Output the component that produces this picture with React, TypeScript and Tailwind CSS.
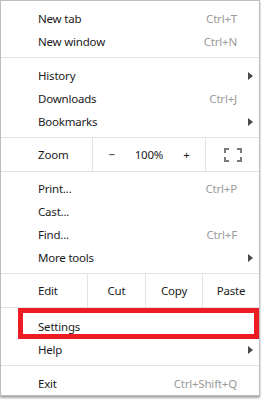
import React from "react";

const font = { fontFamily: '"Noto Sans", "Open Sans", sans-serif' };

function Arrow() {
  return (
    <svg width="5" height="8" viewBox="0 0 5 8" className="ml-auto mr-[6px]">
      <path d="M0 0 L5 4 L0 8 Z" fill="#4a4a4a" />
    </svg>
  );
}

function Item({ label, shortcut, sub }: { label: string; shortcut?: string; sub?: boolean }) {
  return (
    <div className="flex h-[23px] items-center pl-[37px] text-[11.5px] tracking-[-0.2px] text-[#1b1b1b]">
      <span>{label}</span>
      {shortcut && <span className="ml-auto pr-[22px] text-[#9a9a9a]">{shortcut}</span>}
      {sub && <Arrow />}
    </div>
  );
}

function Sep() {
  return <div className="mt-[4px] mb-[6px] h-px bg-[#e3e3e3]" />;
}

export default function App() {
  return (
    <div className="h-[402px] w-[262px] bg-white" style={font}>
      <div className="w-[260px] border border-[#bdbdbd] bg-white pt-[6px] shadow-[0_2px_2px_rgba(0,0,0,0.35)]">
        <Item label="New tab" shortcut="Ctrl+T" />
        <Item label="New window" shortcut="Ctrl+N" />
        <Sep />
        <Item label="History" sub />
        <Item label="Downloads" shortcut="Ctrl+J" />
        <Item label="Bookmarks" sub />

        {/* zoom row */}
        <div className="mt-[4px] flex h-[35px] border-y border-[#e3e3e3] text-[11.5px] tracking-[-0.2px] text-[#1b1b1b]">
          <div className="flex w-[92px] items-center border-r border-[#e3e3e3] pl-[37px]">Zoom</div>
          <div className="flex w-[113px] items-center border-r border-[#e3e3e3]">
            <span className="flex-1 text-center">−</span>
            <span className="flex-1 text-center">100%</span>
            <span className="flex-1 text-center">+</span>
          </div>
          <div className="flex flex-1 items-center justify-center">
            <svg width="18" height="14" viewBox="0 0 18 14" fill="none" stroke="#7a7a7a" strokeWidth="2">
              <path d="M1 5 V1 H5 M13 1 H17 V5 M17 9 V13 H13 M5 13 H1 V9" />
            </svg>
          </div>
        </div>

        <div className="mt-[5px]">
          <Item label="Print..." shortcut="Ctrl+P" />
          <Item label="Cast..." />
          <Item label="Find..." shortcut="Ctrl+F" />
          <Item label="More tools" sub />
        </div>

        {/* edit row */}
        <div className="mt-[4px] flex h-[35px] border-y border-[#e3e3e3] text-[11.5px] tracking-[-0.2px] text-[#1b1b1b]">
          <div className="flex w-[87px] items-center border-r border-[#e3e3e3] pl-[37px]">Edit</div>
          <div className="flex w-[58px] items-center justify-center border-r border-[#e3e3e3]">Cut</div>
          <div className="flex w-[57px] items-center justify-center border-r border-[#e3e3e3]">Copy</div>
          <div className="flex flex-1 items-center justify-center">Paste</div>
        </div>

        <div className="relative mt-[7px]">
          <Item label="Settings" />
          <div className="absolute left-[17px] right-0 top-[-7px] h-[31px] border-[5px] border-[#ed1c24]" />
        </div>
        <Item label="Help" sub />
        <Sep />
        <Item label="Exit" shortcut="Ctrl+Shift+Q" />
      </div>
    </div>
  );
}
